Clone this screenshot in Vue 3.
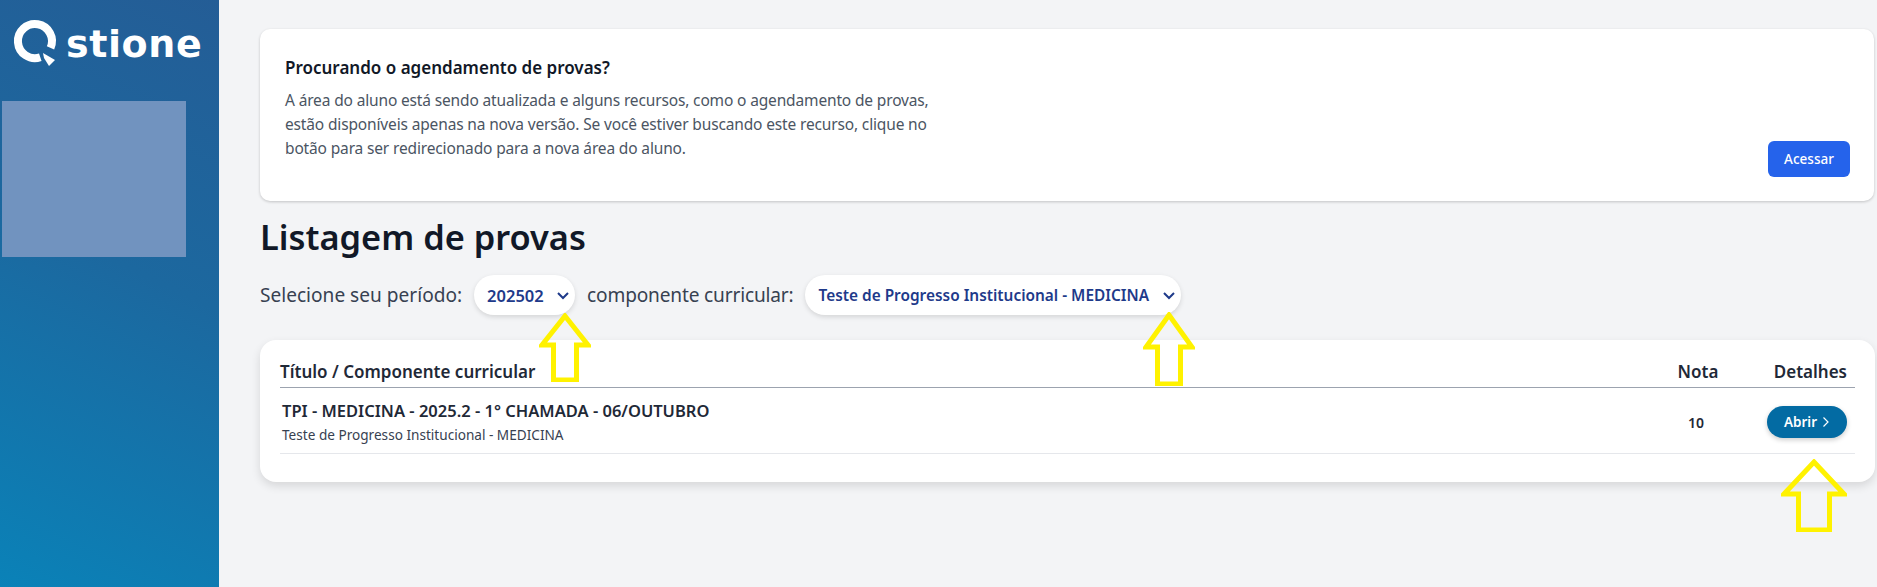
<template>
  <div class="layout">
    <aside class="sidebar">
      <div class="logo">
        <svg class="logo-mark" width="50" height="50" viewBox="0 0 50 50" aria-hidden="true">
          <path d="M38.5 29.9A17 17 0 1 0 28.3 39.2" fill="none" stroke="#fff" stroke-width="8" />
          <path d="M31 35 L43 42 L37 48 L32 40 Z" fill="#fff" />
        </svg>
        <span class="logo-text">stione</span>
      </div>
      <div class="photo"></div>
    </aside>

    <main class="content">
      <section class="notice">
        <div class="notice-body">
          <h2>Procurando o agendamento de provas?</h2>
          <p>
            A área do aluno está sendo atualizada e alguns recursos, como o agendamento de provas,<br />
            estão disponíveis apenas na nova versão. Se você estiver buscando este recurso, clique no<br />
            botão para ser redirecionado para a nova área do aluno.
          </p>
        </div>
        <button class="access">Acessar</button>
      </section>

      <h1>Listagem de provas</h1>

      <div class="filters">
        <span>Selecione seu período:</span>
        <div class="pill period">
          <span>202502</span>
          <svg width="14" height="14" viewBox="0 0 14 14"><path d="M2 5 7 10 12 5" fill="none" stroke="#1e3a8a" stroke-width="2" /></svg>
        </div>
        <span class="component-label">componente curricular:</span>
        <div class="pill component">
          <span>Teste de Progresso Institucional - MEDICINA</span>
          <svg width="14" height="14" viewBox="0 0 14 14"><path d="M2 5 7 10 12 5" fill="none" stroke="#1e3a8a" stroke-width="2" /></svg>
        </div>
      </div>

      <section class="exams">
        <div class="head">
          <span class="col-title">Título / Componente curricular</span>
          <span class="col-grade">Nota</span>
          <span class="col-details">Detalhes</span>
        </div>
        <div v-for="exam in exams" :key="exam.title" class="row">
          <div class="col-title">
            <div class="exam-title">{{ exam.title }}</div>
            <div class="exam-sub">{{ exam.component }}</div>
          </div>
          <div class="col-grade grade">{{ exam.grade }}</div>
          <div class="col-details">
            <button class="open">
              Abrir
              <svg width="8" height="12" viewBox="0 0 8 12"><path d="M1.5 1.5 6 6 1.5 10.5" fill="none" stroke="#fff" stroke-width="1.2" /></svg>
            </button>
          </div>
        </div>
      </section>
    </main>

    <!-- yellow arrows drawn over the screenshot -->
    <svg
      v-for="a in arrows"
      :key="a.x"
      class="arrow"
      :style="{ left: a.x + 'px', top: a.y + 'px' }"
      :width="a.w"
      :height="a.h"
    >
      <path :d="arrowPath(a)" fill="none" stroke="#fff200" stroke-width="5" />
    </svg>
  </div>
</template>

<script setup>
const exams = [
  {
    title: "TPI - MEDICINA - 2025.2 - 1° CHAMADA - 06/OUTUBRO",
    component: "Teste de Progresso Institucional - MEDICINA",
    grade: 10,
  },
];

// x, y = outer box, s = shaft width, b = where the head ends
const arrows = [
  { x: 539, y: 313, w: 52, h: 69, s: 27, b: 34 },
  { x: 1143, y: 312, w: 52, h: 74, s: 27, b: 37 },
  { x: 1781, y: 459, w: 66, h: 73, s: 35, b: 37 },
];

const arrowPath = ({ w, h, s, b }) => {
  const mid = w / 2;
  const l = mid - s / 2 + 2;
  const r = mid + s / 2 - 2;
  return `M${mid} 3 L${w - 3} ${b - 2} L${r} ${b - 2} L${r} ${h - 2} L${l} ${h - 2} L${l} ${b - 2} L3 ${b - 2} Z`;
};
</script>

<style>
html,
body {
  margin: 0;
  background: #f3f4f6;
}
</style>

<style scoped>
.layout {
  position: relative;
  display: grid;
  grid-template-columns: 219px 1fr;
  height: 587px;
  overflow: hidden;
  background: #f3f4f6;
  color: #111827;
  font-family: "Noto Sans", "Open Sans", sans-serif;
}

.sidebar {
  background: linear-gradient(205deg, #245d96 0%, #1c689f 45%, #0a82b8 100%);
  padding-top: 18px;
}

.logo {
  display: flex;
  align-items: flex-start;
  margin-left: 12px;
  height: 83px;
}

.logo-mark {
  flex: none;
}

.logo-text {
  margin: 1px 0 0 4px;
  color: #fff;
  font-family: "DejaVu Sans", sans-serif;
  font-size: 38px;
  line-height: 50px;
  font-weight: 700;
  letter-spacing: 0.6px;
}

.photo {
  width: 184px;
  height: 156px;
  margin-left: 2px;
  background: #7193bf;
}

.content {
  padding: 29px 2px 0 41px;
  min-width: 0;
}

.notice {
  display: flex;
  justify-content: space-between;
  align-items: flex-end;
  height: 172px;
  box-sizing: border-box;
  margin-right: 1px;
  padding: 26px 24px 24px 25px;
  background: #fff;
  border-radius: 10px;
  box-shadow: 0 1px 3px rgba(0, 0, 0, 0.2);
}

.notice-body {
  align-self: flex-start;
}

.notice h2 {
  margin: 0;
  font-size: 17px;
  line-height: 26px;
  font-weight: 600;
}

.notice p {
  margin: 7px 0 0;
  font-size: 15.5px;
  line-height: 24px;
  color: #4b5563;
  letter-spacing: -0.15px;
}

.access {
  width: 82px;
  height: 36px;
  border: 0;
  border-radius: 6px;
  background: #2563eb;
  color: #fff;
  font: 500 13.5px "Noto Sans", sans-serif;
}

h1 {
  margin: 14px 0 0;
  font-size: 34.4px;
  line-height: 44px;
  font-weight: 600;
}

.filters {
  display: flex;
  align-items: center;
  gap: 12px;
  margin-top: 16px;
  height: 40px;
  font-size: 19.1px;
  color: #374151;
}

.component-label {
  letter-spacing: -0.17px;
}

.pill {
  display: flex;
  align-items: center;
  justify-content: space-between;
  height: 40px;
  box-sizing: border-box;
  padding: 0 5px 0 13px;
  background: #fff;
  border-radius: 20px;
  box-shadow: 0 2px 5px rgba(0, 0, 0, 0.13);
  color: #1e3a8a;
  font-size: 15.4px;
  font-weight: 600;
}

.period {
  width: 101px;
  font-size: 16.5px;
}

.component {
  width: 376px;
}

.exams {
  height: 142px;
  box-sizing: border-box;
  margin-top: 25px;
  padding: 16px 20px 0;
  background: #fff;
  border-radius: 16px;
  box-shadow: 0 4px 10px rgba(0, 0, 0, 0.12);
}

.head,
.row {
  display: grid;
  grid-template-columns: 1fr 68px 123px;
  align-items: center;
}

.head {
  height: 31px;
  border-bottom: 1px solid #9ca3af;
  font-size: 17px;
  font-weight: 600;
  color: #1f2937;
}

.row {
  height: 66px;
  box-sizing: border-box;
  padding-top: 3px;
  border-bottom: 1px solid #e5e7eb;
}

.col-grade {
  text-align: center;
}

.col-details {
  text-align: right;
  padding-right: 8px;
}

.row .col-title {
  padding-left: 2px;
}

.exam-title {
  font-size: 16.5px;
  line-height: 22px;
  font-weight: 600;
  color: #1f2937;
}

.exam-sub {
  margin-top: 3px;
  font-size: 13.6px;
  line-height: 20px;
  color: #374151;
}

.grade {
  padding-right: 4px;
  font-size: 14px;
  font-weight: 600;
  color: #1f2937;
}

.open {
  display: inline-flex;
  align-items: center;
  justify-content: center;
  gap: 5px;
  width: 80px;
  height: 32px;
  border: 0;
  border-radius: 16px;
  background: #036ba3;
  box-shadow: 0 2px 5px rgba(0, 0, 0, 0.2);
  color: #fff;
  font: 600 13.5px "Noto Sans", sans-serif;
}

.arrow {
  position: absolute;
}
</style>
